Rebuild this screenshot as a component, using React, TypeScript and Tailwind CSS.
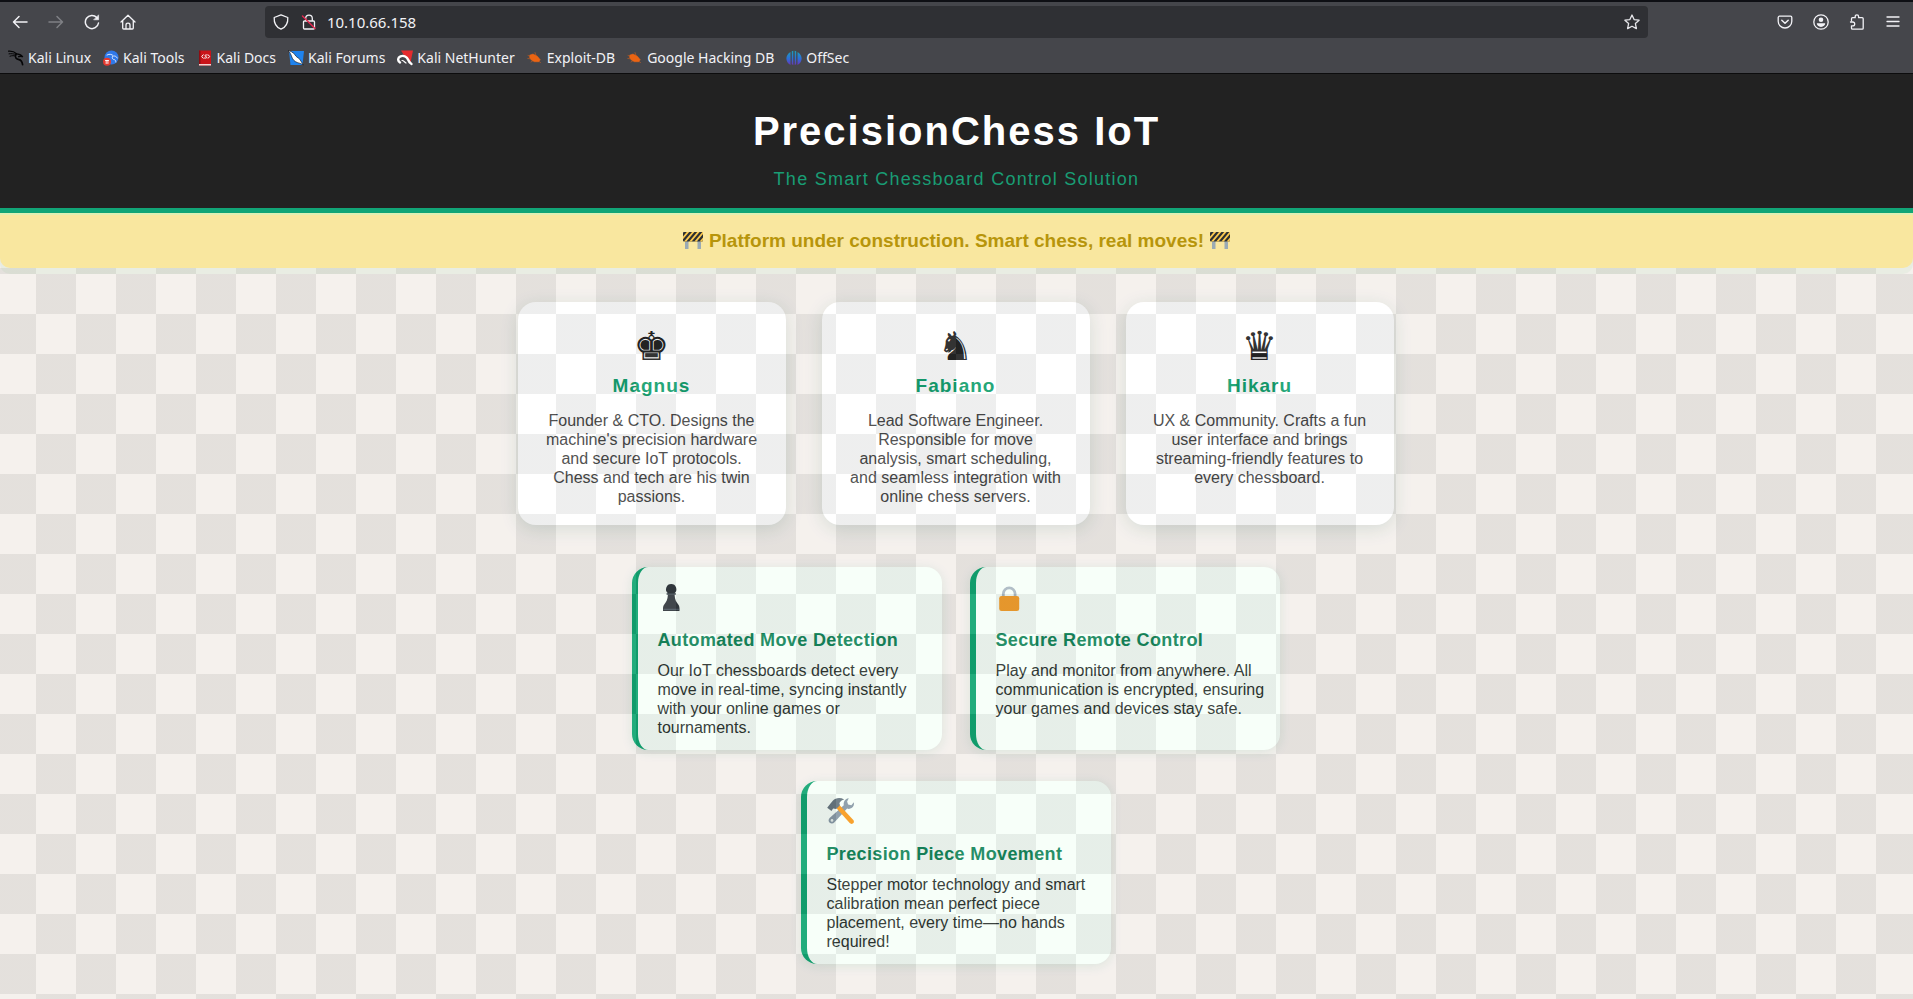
import React from "react";

type IconProps = { children: React.ReactNode; className?: string };

function Icon({ children, className = "" }: IconProps) {
  return (
    <svg
      viewBox="0 0 16 16"
      aria-hidden="true"
      className={`h-4 w-4 shrink-0 ${className}`}
      fill="none"
      stroke="currentColor"
      strokeWidth="1.3"
      strokeLinecap="round"
      strokeLinejoin="round"
    >
      {children}
    </svg>
  );
}

function ToolbarButton({ label, disabled, children }: { label: string; disabled?: boolean; children: React.ReactNode }) {
  return (
    <button
      type="button"
      aria-label={label}
      disabled={disabled}
      className="flex h-8 w-9 items-center justify-center text-[#f2f2f6] disabled:text-[#7f8085]"
    >
      <Icon>{children}</Icon>
    </button>
  );
}

const dragon = (
  <g fill="none" stroke="#050506">
    <path d="M.5 1.200c3-.2 6 .5 8 2.500" strokeWidth="1.300" />
    <path d="M1 3.800c2.500-.4 5 0 7 .8M2 6.200c2-.8 4-.6 5.500-.2" strokeWidth="1" />
    <path d="M8.300 3.900c2.200.1 4.700.7 6.200 2.700-1.500-.5-2.800-.5-3.800.1" strokeWidth="1.400" />
    <path d="M7.800 4.500c-1.500 3 .7 4.700 3.200 5.100 2.200.4 3.200 2.500 3.600 5" strokeWidth="1.700" />
  </g>
);

const bug = (
  <g fill="#ec6413" stroke="#ec6413" strokeWidth=".5">
    <path d="M3 5 6 4l4.300 2.200 3 3.600-1.600 2-4.400-.1-3.300-2-1.300-2.400z" />
    <path d="M1 5.500l3 1M.8 8.500l4 .5M4 12l3-2M13.500 12.500l-2-1.500M8 2.500l1 3" fill="none" />
  </g>
);

const bookmarks: { name: string; icon: React.ReactNode }[] = [
  { name: "Kali Linux", icon: dragon },
  {
    name: "Kali Tools",
    icon: (
      <>
        <circle cx="8.500" cy="7.500" r="7" fill="#2f78e8" stroke="none" />
        <path d="M4 5c3-1.500 5-.5 6.500 1 1.500-.2 3 .5 3.800 2M9.500 6.500c-1 2 .5 3 2 3.200 1 .3 1.300 1.300 1.300 2.300" stroke="#dce9ff" strokeWidth="1" />
        <circle cx="4" cy="11.800" r="4" fill="#e5392f" stroke="none" />
        <path d="M2.500 10.500h3M3.200 10.500v3M4.900 10.500v3" stroke="#fff" strokeWidth=".9" />
      </>
    ),
  },
  {
    name: "Kali Docs",
    icon: (
      <>
        <path d="M2 .5h12v15H2z" fill="#c91319" stroke="none" />
        <path d="M2 14h12v1.500H2z" fill="#f4d3d3" stroke="none" />
        <path d="M2 .5h1.500V14H2z" fill="#8e0d12" stroke="none" />
        <path d="M6.200 4.800 4.800 6.500l1.400 1.700M10 5c-2.400-.6-2.600 1.100-1 1.600s.8 2-1.500 1.400M11.200 4.800l1.400 1.700-1.400 1.700" stroke="#fff" strokeWidth="1" />
      </>
    ),
  },
  {
    name: "Kali Forums",
    icon: (
      <>
        <path d="M1 1h15l-1.500 14H2.500z" fill="#1f83ee" stroke="none" />
        <path d="M0 .5C3 1 5 2.600 6.800 4.500c1 2.300 3.500 3.300 5 4.800l3.500 5.700c-2-1.500-4.500-2-6-2.500-3-1-4.500-3-5.500-5.500C3 4.500 2 2 0 .5z" fill="#fff" stroke="#0a0a0c" strokeWidth=".6" />
      </>
    ),
  },
  {
    name: "Kali NetHunter",
    icon: (
      <>
        <path d="M4 .5h12l-2.500 12L8 7z" fill="#e52b2e" stroke="none" />
        <path d="M3 12.500c-2.500-1.500-2.500-5 .5-6.200C7 5 10 7 11 9.500s1.500 3.500 3.500 4.500" stroke="#fff" strokeWidth="2.400" />
        <path d="M5 10.500c1.500-.3 2.300 1.500 4 2.500" stroke="#fff" strokeWidth="1.200" />
      </>
    ),
  },
  { name: "Exploit-DB", icon: bug },
  { name: "Google Hacking DB", icon: bug },
  {
    name: "OffSec",
    icon: (
      <>
        <defs>
          <linearGradient id="offsec" x1="0" y1="0" x2="0" y2="1">
            <stop offset="0" stopColor="#1ba0b8" />
            <stop offset=".55" stopColor="#2b6fd8" />
            <stop offset="1" stopColor="#6a35b8" />
          </linearGradient>
        </defs>
        <path
          d="M4.500 2v13C-1 12-1 5 4.500 2zM5.800 1.200l1.500-.4V15l-1.500-.8zM8.700.8l1.500.4v13l-1.500.8zM11.500 2c5.500 3 5.500 10 0 13z"
          fill="url(#offsec)"
          stroke="none"
        />
      </>
    ),
  },
];

function BrowserChrome() {
  return (
    <div className="border-t-2 border-b border-t-[#0e0f14] border-b-[#0c0c0d] bg-[#45464b] font-['Noto_Sans',sans-serif] text-[#f2f2f6]">
      <div className="flex h-10 items-center px-0.5">
        <ToolbarButton label="Back">
          <path d="M15 8H1.500M7 2.500 1.500 8 7 13.500" strokeWidth="1.500" />
        </ToolbarButton>
        <ToolbarButton label="Forward" disabled>
          <path d="M1 8h13.500M9 2.500 14.500 8 9 13.500" strokeWidth="1.500" />
        </ToolbarButton>
        <ToolbarButton label="Reload">
          <path d="M14.500 9A6.600 6.600 0 1 1 12.800 3.500" strokeWidth="1.500" />
          <path d="M14.600 1.200v4.600H10z" fill="currentColor" strokeWidth=".6" />
        </ToolbarButton>
        <ToolbarButton label="Home">
          <path d="M1 8 8 1.200 15 8M2.700 6.700V14c0 .6.400 1 1 1h8.600c.6 0 1-.4 1-1V6.700M6 15v-4c0-1 .8-1.800 2-1.800s2 .8 2 1.800v4" />
        </ToolbarButton>
        <div className="min-w-0 flex-[4]" />
        <div className="flex h-8 min-w-0 flex-[46] items-center rounded bg-[#2f3034] px-2">
          <Icon>
            <path d="M8 .8 14.800 3.500c.3 5-1.500 9.500-6.800 11.700C2.700 13 .9 8.500 1.200 3.500z" />
          </Icon>
          <Icon className="ml-3">
            <path d="M4.700 7V4.500a3.300 3.300 0 0 1 6.600 0V7M3.500 7h9c.6 0 1 .4 1 1v6c0 .6-.4 1-1 1h-9c-.6 0-1-.4-1-1V8c0-.6.400-1 1-1z" />
            <path d="M1.500 2 14 14.500" stroke="#e22850" strokeWidth="1.500" />
          </Icon>
          <input
            aria-label="Address"
            defaultValue="10.10.66.158"
            className="ml-2.5 min-w-0 flex-1 bg-transparent text-[15px] leading-6 text-[#f2f2f6] outline-none"
          />
          <button type="button" aria-label="Bookmark this page" className="text-[#e6e6ea]">
            <Icon>
              <path d="m8 1 2.100 4.600 5 .6-3.700 3.400 1 5L8 12.200l-4.400 2.400 1-5L.9 6.200l5-.6z" />
            </Icon>
          </button>
        </div>
        <div className="min-w-0 flex-[4]" />
        <ToolbarButton label="Pocket">
          <path d="M2.500 2.200h11c.7 0 1.300.6 1.300 1.300v3.700a6.800 6.800 0 0 1-13.600 0V3.500c0-.7.600-1.300 1.300-1.300z" />
          <path d="M4.800 6.300 8 9.300l3.200-3" strokeWidth="1.500" />
        </ToolbarButton>
        <ToolbarButton label="Account">
          <circle cx="8" cy="8" r="7.200" />
          <circle cx="8" cy="5.800" r="2.300" fill="currentColor" stroke="none" />
          <path d="M3.800 9.300h8.400c0 2-1.800 3.600-4.200 3.600s-4.200-1.600-4.200-3.600z" fill="currentColor" stroke="none" />
        </ToolbarButton>
        <ToolbarButton label="Extensions">
          <path d="M2.500 6.500V4.700c0-.6.400-1 1-1h2.700V2.500a1.700 1.700 0 0 1 3.400 0v1.200h3.600c.6 0 1 .4 1 1v9.500c0 .6-.4 1-1 1H3.500c-.6 0-1-.4-1-1v-2.400h1.300a1.900 1.900 0 0 0 0-3.800H1.500" />
        </ToolbarButton>
        <ToolbarButton label="Menu">
          <path d="M2 3h12M2 7.500h12M2 12h12" />
        </ToolbarButton>
      </div>
      <nav aria-label="Bookmarks" className="flex h-[31px] items-center gap-3 px-2">
        {bookmarks.map((b) => (
          <a key={b.name} href="#" className="flex items-center gap-1 text-sm whitespace-nowrap">
            <Icon>{b.icon}</Icon>
            {b.name}
          </a>
        ))}
      </nav>
    </div>
  );
}

function Barrier() {
  return (
    <svg viewBox="0 0 20 17" role="img" aria-label="Construction" className="h-[17px] w-5 shrink-0">
      <path d="M2 8h3.500v9H2zM14.500 8H18v9h-3.500z" fill="#9aaab4" />
      <rect width="20" height="9.500" rx="1" fill="#2b2f33" />
      <path
        d="M0 4.500 3.800 0h2.400L0 7.300zM1 9.500 9 0h2.400L3.400 9.500zM6.200 9.500l8-9.500h2.400l-8 9.500zM11.400 9.500l8-9.500h.6v2.100l-6.200 7.400zM16.600 9.500 20 5.500v2.800l-1 1.200z"
        fill="#fbc94f"
      />
    </svg>
  );
}

const pawn = (
  <>
    <path
      d="M13.200 1a5.200 5.200 0 0 1 3.300 9.200h1.300v1.600h-1.200c.3 4.700 1.600 7.300 3.300 9.200 1.100 1.300 1.600 2.600 1.600 4.500v2.500h-16.500v-2.500c0-1.900.5-3.200 1.600-4.500 1.700-1.900 3-4.500 3.300-9.200H8.600v-1.600h1.300A5.200 5.200 0 0 1 13.200 1z"
      fill="#31373d"
    />
    <path d="M9 11h8.400M5.500 26.300h15.500" stroke="#66757f" strokeWidth=".7" />
  </>
);

const lock = (
  <>
    <path d="M7.300 15v-4.200a5.900 5.900 0 0 1 11.800 0V15" fill="none" stroke="#aab8c2" strokeWidth="2.800" />
    <rect x="3.200" y="13" width="20" height="15" rx="2.300" fill="#f5a02c" />
  </>
);

const tools = (
  <>
    <path
      d="M26.800 5.200c.6 2.300-.2 4.700-2.200 5.900-1.400.9-3 1-4.500.5L7.500 25.300c-1.300 1.500-3.400 1.700-4.800.5s-1.500-3.400-.1-4.800L16.800 8.300c-.5-2.200.2-4.700 2.100-6.100.9-.7 1.900-1 2.900-1l-1.700 3.300 1 3 3.300.7z"
      fill="#8899a6"
    />
    <circle cx="5" cy="23.400" r="1.300" fill="#e4eeea" />
    <path d="M8.800 10.600 12 7.500l14.300 15.400c.9 1 .8 2.500-.2 3.400s-2.500.8-3.400-.2z" fill="#f79a1c" />
    <path d="M.2 10.800 4.500 14l1.600-2.400 3.100.3 3.700-3.600-.5-2.200C13.200 4.200 15 3 17.200 2.400 13 .2 8.500.8 5.800 3.800L3.500 6.500z" fill="#66757f" />
  </>
);

const team = [
  {
    piece: "♚",
    name: "Magnus",
    bio: "Founder & CTO. Designs the machine's precision hardware and secure IoT protocols. Chess and tech are his twin passions.",
  },
  {
    piece: "♞",
    name: "Fabiano",
    bio: "Lead Software Engineer. Responsible for move analysis, smart scheduling, and seamless integration with online chess servers.",
  },
  {
    piece: "♛",
    name: "Hikaru",
    bio: "UX & Community. Crafts a fun user interface and brings streaming-friendly features to every chessboard.",
  },
];

const features = [
  {
    icon: pawn,
    title: "Automated Move Detection",
    text: "Our IoT chessboards detect every move in real-time, syncing instantly with your online games or tournaments.",
  },
  {
    icon: lock,
    title: "Secure Remote Control",
    text: "Play and monitor from anywhere. All communication is encrypted, ensuring your games and devices stay safe.",
  },
  {
    icon: tools,
    title: "Precision Piece Movement",
    text: "Stepper motor technology and smart calibration mean perfect piece placement, every time—no hands required!",
  },
];

export default function App() {
  return (
    <div className="flex min-h-screen flex-col bg-[#f4f0ec] font-['Liberation_Sans',sans-serif]">
      <BrowserChrome />
      <header className="relative z-30 border-b-[5px] border-[#11a577] bg-[#222] pt-[33px] pb-4 text-center">
        <h1 className="text-[40px] leading-[48px] font-bold tracking-[2px] text-white">PrecisionChess IoT</h1>
        <p className="mt-[11px] text-lg leading-[26px] tracking-[0.07em] text-[#199d74]">The Smart Chessboard Control Solution</p>
      </header>
      <div className="relative z-20 flex items-center justify-center gap-1.5 rounded-b-[10px] border-t-2 border-[#dff0b4] bg-[#f9e79f] pt-3.5 pb-4 text-[19px] leading-[23px] font-bold text-[#b7950b] shadow-[0_6px_0_rgba(100,190,120,0.08)]">
        <Barrier />
        <p>Platform under construction. Smart chess, real moves!</p>
        <Barrier />
      </div>
      <main className="relative flex flex-1 flex-col gap-[42px] pt-[34px] pr-0.5 pb-8">
        <section aria-label="Team" className="flex flex-wrap justify-center gap-9">
          {team.map((m) => (
            <article
              key={m.name}
              className="w-[268px] rounded-[18px] bg-white px-6 pt-6 pb-[19px] text-center shadow-[0_4px_18px_rgba(34,90,75,0.15)]"
            >
              <div className="h-[46px] font-['DejaVu_Sans',sans-serif] text-[40px] leading-10 text-[#222]">{m.piece}</div>
              <h2 className="text-[19px] leading-7 font-bold tracking-[1px] text-[#11a06e]">{m.name}</h2>
              <p className="mt-[11px] text-base leading-[19px] text-[#444]">{m.bio}</p>
            </article>
          ))}
        </section>
        <section aria-label="Features" className="mx-auto flex max-w-[700px] flex-wrap justify-center gap-x-7 gap-y-[31px]">
          {features.map((f) => (
            <article
              key={f.title}
              className="w-[310px] rounded-2xl border-l-[6px] border-[#0fa571] bg-[#f6fff8] pt-4 pr-3 pb-[13px] pl-5 shadow-[0_2px_12px_rgba(22,120,90,0.12)]"
            >
              <svg viewBox="0 0 28 28" aria-hidden="true" className="h-7 w-7">
                {f.icon}
              </svg>
              <h3 className="mt-[17px] text-lg leading-6 font-bold tracking-[0.02em] text-[#12855a]">{f.title}</h3>
              <p className="mt-[9px] text-base leading-[19px] text-[#2b332f]">{f.text}</p>
            </article>
          ))}
        </section>
        <div
          aria-hidden="true"
          className="pointer-events-none absolute inset-0 z-10 bg-[conic-gradient(rgba(38,44,44,0.08)_25%,rgba(255,255,255,0.08)_25%_50%,rgba(38,44,44,0.08)_50%_75%,rgba(255,255,255,0.08)_75%)] bg-size-[80px_80px] bg-position-[-4px_6px]"
        />
      </main>
    </div>
  );
}
